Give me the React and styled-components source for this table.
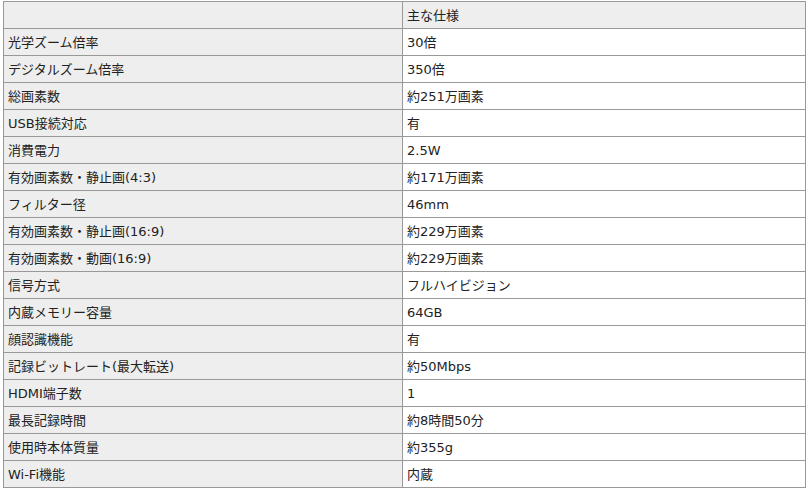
import styled, { createGlobalStyle } from "styled-components";

const GlobalStyle = createGlobalStyle`
  body {
    margin: 0;
    background: #fff;
    font-family: "DejaVu Sans", "Noto Sans CJK JP", sans-serif;
  }
`;

const specs = [
  ["光学ズーム倍率", "30倍"],
  ["デジタルズーム倍率", "350倍"],
  ["総画素数", "約251万画素"],
  ["USB接続対応", "有"],
  ["消費電力", "2.5W"],
  ["有効画素数・静止画(4:3)", "約171万画素"],
  ["フィルター径", "46mm"],
  ["有効画素数・静止画(16:9)", "約229万画素"],
  ["有効画素数・動画(16:9)", "約229万画素"],
  ["信号方式", "フルハイビジョン"],
  ["内蔵メモリー容量", "64GB"],
  ["顔認識機能", "有"],
  ["記録ビットレート(最大転送)", "約50Mbps"],
  ["HDMI端子数", "1"],
  ["最長記録時間", "約8時間50分"],
  ["使用時本体質量", "約355g"],
  ["Wi-Fi機能", "内蔵"],
];

const Wrap = styled.div`
  padding: 1px 0 0 3px;
`;

const SpecTable = styled.table`
  width: 802px;
  border-collapse: collapse;
  table-layout: fixed;
  font-size: 13px;
  color: #222;
`;

const Row = styled.tr`
  height: 27px;
`;

const Cell = styled.td`
  border: 1px solid #999;
  padding: 2px 5px 0 4px;
  height: 24px;
  line-height: 24px;
  white-space: nowrap;
  vertical-align: middle;
  background: ${(p) => (p.$shade ? "#eeeeee" : "#ffffff")};
`;

const App = () => {
  return (
    <Wrap>
      <GlobalStyle />
      <SpecTable>
        <colgroup>
          <col style={{ width: "399px" }} />
          <col style={{ width: "403px" }} />
        </colgroup>
        <tbody>
          <Row>
            <Cell $shade></Cell>
            <Cell $shade>主な仕様</Cell>
          </Row>
          {specs.map(([label, value]) => (
            <Row key={label}>
              <Cell $shade>{label}</Cell>
              <Cell>{value}</Cell>
            </Row>
          ))}
        </tbody>
      </SpecTable>
    </Wrap>
  );
};

export default App;
